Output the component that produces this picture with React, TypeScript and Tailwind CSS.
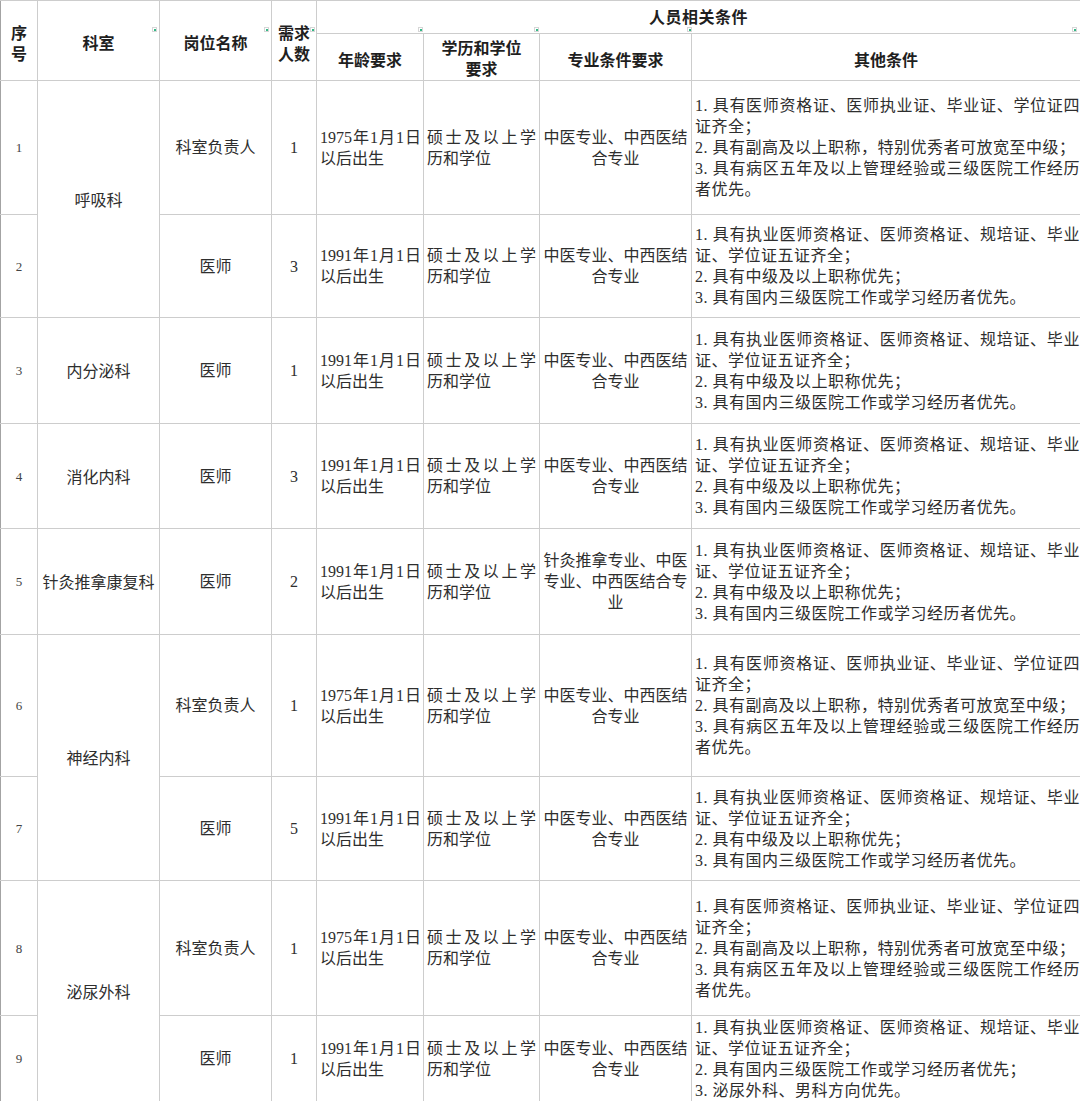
import React from "react"

const LEAD = [
  "1. 具有医师资格证、医师执业证、毕业证、学位证四证齐全；",
  "2. 具有副高及以上职称，特别优秀者可放宽至中级；",
  "3. 具有病区五年及以上管理经验或三级医院工作经历者优先。",
]

const DOC = [
  "1. 具有执业医师资格证、医师资格证、规培证、毕业证、学位证五证齐全；",
  "2. 具有中级及以上职称优先；",
  "3. 具有国内三级医院工作或学习经历者优先。",
]

const URO = [
  "1. 具有执业医师资格证、医师资格证、规培证、毕业证、学位证五证齐全；",
  "2. 具有国内三级医院工作或学习经历者优先；",
  "3. 泌尿外科、男科方向优先。",
]

type Row = {
  no: number
  dept?: string
  span?: number
  post: string
  count: number
  born: string
  major: string
  other: string[]
  h: string
}

const MAJOR = "中医专业、中西医结合专业"

const ROWS: Row[] = [
  { no: 1, dept: "呼吸科", span: 2, post: "科室负责人", count: 1, born: "1975年1月1日以后出生", major: MAJOR, other: LEAD, h: "h-[134px]" },
  { no: 2, post: "医师", count: 3, born: "1991年1月1日以后出生", major: MAJOR, other: DOC, h: "h-[103px]" },
  { no: 3, dept: "内分泌科", span: 1, post: "医师", count: 1, born: "1991年1月1日以后出生", major: MAJOR, other: DOC, h: "h-[106px]" },
  { no: 4, dept: "消化内科", span: 1, post: "医师", count: 3, born: "1991年1月1日以后出生", major: MAJOR, other: DOC, h: "h-[105px]" },
  { no: 5, dept: "针灸推拿康复科", span: 1, post: "医师", count: 2, born: "1991年1月1日以后出生", major: "针灸推拿专业、中医专业、中西医结合专业", other: DOC, h: "h-[106px]" },
  { no: 6, dept: "神经内科", span: 2, post: "科室负责人", count: 1, born: "1975年1月1日以后出生", major: MAJOR, other: LEAD, h: "h-[142px]" },
  { no: 7, post: "医师", count: 5, born: "1991年1月1日以后出生", major: MAJOR, other: DOC, h: "h-[104px]" },
  { no: 8, dept: "泌尿外科", span: 2, post: "科室负责人", count: 1, born: "1975年1月1日以后出生", major: MAJOR, other: LEAD, h: "h-[135px]" },
  { no: 9, post: "医师", count: 1, born: "1991年1月1日以后出生", major: MAJOR, other: URO, h: "h-[86px]" },
]

// little filter marker that the spreadsheet leaves on header cells
function Marker({ className }: { className: string }) {
  return (
    <span
      className={`absolute flex size-[5px] items-center justify-center border border-[#d6d6d6] bg-white ${className}`}
    >
      <span className="size-[2px] bg-[#34b886]" />
    </span>
  )
}

const cell = "border border-[#cdcdcd] align-middle"
const head = `${cell} relative text-center font-bold text-[#1f1f1f]`

export default function App() {
  return (
    <div className="min-h-[1101px] w-[1080px] bg-white font-['Liberation_Serif','Noto_Sans_CJK_SC',serif] text-[16px] leading-[21px] text-[#2e2e2e]">
      <table className="w-[1080px] table-fixed border-collapse">
        <colgroup>
          <col className="w-[37px]" />
          <col className="w-[122px]" />
          <col className="w-[112px]" />
          <col className="w-[45px]" />
          <col className="w-[107px]" />
          <col className="w-[116px]" />
          <col className="w-[152px]" />
          <col className="w-[389px]" />
        </colgroup>
        <thead>
          <tr className="h-[33px]">
            <th rowSpan={2} className={`${head} border-l-[#a3a3a3] px-0 pt-[6px]`}>
              序<br />号
            </th>
            <th rowSpan={2} className={`${head} pt-[6px]`}>
              科室
              <Marker className="top-[26px] right-[2px]" />
            </th>
            <th rowSpan={2} className={`${head} pt-[6px]`}>
              岗位名称
              <Marker className="top-[26px] right-[2px]" />
            </th>
            <th rowSpan={2} className={`${head} px-[4px] pt-[6px]`}>
              需求人数
              <Marker className="top-[26px] right-[1px]" />
            </th>
            <th colSpan={4} className={`${head} tracking-[0.5px]`}>
              人员相关条件
              <Marker className="top-[26px] left-[101px]" />
              <Marker className="top-[26px] left-[217px]" />
              <Marker className="top-[26px] left-[370px]" />
              <Marker className="top-[26px] right-[3px]" />
            </th>
          </tr>
          <tr className="h-[47px]">
            <th className={`${head} pt-[6px]`}>年龄要求</th>
            <th className={`${head} pt-[4px]`}>
              学历和学位
              <br />
              要求
            </th>
            <th className={`${head} pt-[6px]`}>专业条件要求</th>
            <th className={`${head} pt-[6px]`}>其他条件</th>
          </tr>
        </thead>
        <tbody>
          {ROWS.map((r) => (
            <tr key={r.no} className={r.h}>
              <td className={`${cell} border-l-[#a3a3a3] px-0 text-center text-[13px] text-[#444]`}>
                {r.no}
              </td>
              {r.dept && (
                <td rowSpan={r.span} className={`${cell} px-[2px] pt-[2px] text-center`}>
                  {r.dept}
                </td>
              )}
              <td className={`${cell} px-[3px] text-center`}>{r.post}</td>
              <td className={`${cell} px-0 text-center`}>{r.count}</td>
              <td className={`${cell} pl-[3px] pr-[2px] text-justify`}>{r.born}</td>
              <td className={`${cell} pl-[3px] pr-[3px] text-justify`}>硕士及以上学历和学位</td>
              <td className={`${cell} px-[2px] text-center`}>{r.major}</td>
              <td className={`${cell} pl-[3px] pr-0 tracking-[0.5px]`}>
                {r.other.map((line) => (
                  <div key={line} className="text-justify">
                    {line}
                  </div>
                ))}
              </td>
            </tr>
          ))}
        </tbody>
      </table>
    </div>
  )
}
